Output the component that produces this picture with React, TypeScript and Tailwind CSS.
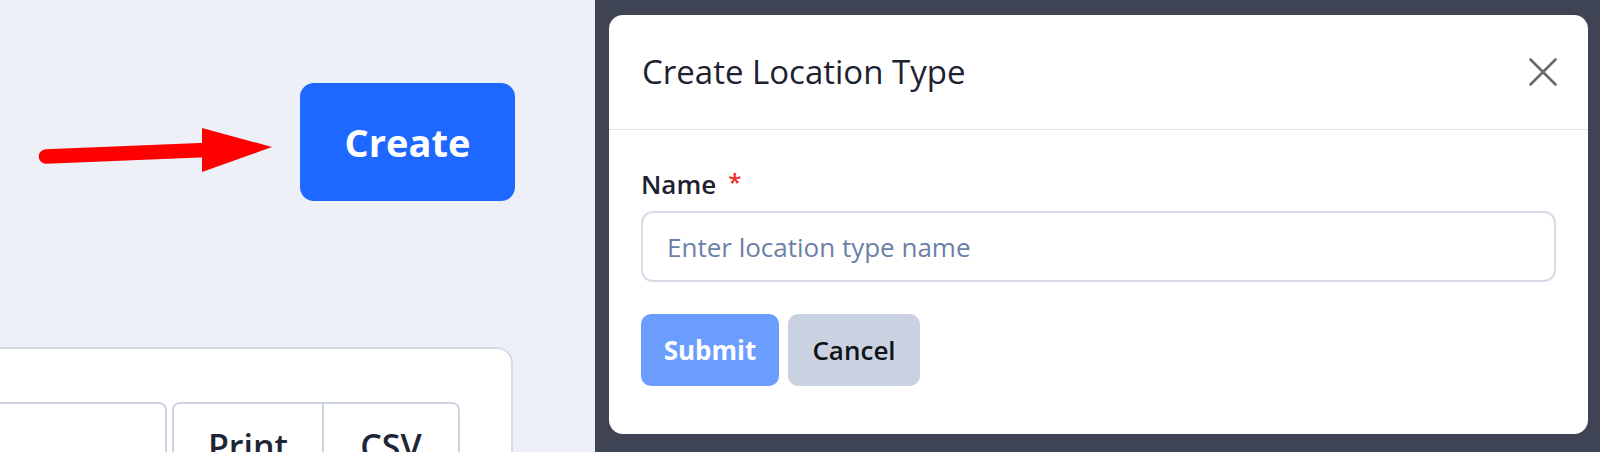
import React from "react";

export default function App() {
  return (
    <div className="flex h-[452px] w-[1600px] overflow-hidden font-['Open_Sans',sans-serif]">
      {/* Left page area */}
      <div className="flex h-full w-[595px] shrink-0 flex-col overflow-hidden bg-[#edf0f6]">
        <div className="flex items-start pt-[83px]">
          <svg
            className="ml-[30px] mr-[20px] mt-[37px] shrink-0"
            width="250"
            height="60"
            viewBox="0 0 250 60"
          >
            <line x1="16" y1="36.5" x2="176" y2="30" stroke="#ff0000" strokeWidth="14.5" strokeLinecap="round" />
            <polygon points="172,8 242,27 172,52" fill="#ff0000" />
          </svg>
          <button className="flex h-[118px] w-[215px] shrink-0 items-center justify-center rounded-[14px] bg-[#1f68ff] text-[38px] font-bold leading-none text-white">
            Create
          </button>
        </div>
        <div className="ml-[-40px] mt-[146px] h-[200px] w-[553px] shrink-0 rounded-[16px] border-2 border-[#d5dae6] bg-white pt-[53px]">
          <div className="flex">
            <div className="h-[80px] w-[205px] rounded-tr-[8px] border-2 border-[#cdd3e0]" />
            <div className="ml-[5px] flex h-[80px] w-[152px] justify-center rounded-tl-[8px] border-2 border-[#cdd3e0] pt-[22px] text-[34px] font-semibold leading-[40px] text-[#1e2636]">
              Print
            </div>
            <div className="flex h-[80px] w-[136px] justify-center rounded-tr-[8px] border-2 border-l-0 border-[#cdd3e0] pt-[22px] text-[34px] font-semibold leading-[40px] text-[#1e2636]">
              CSV
            </div>
          </div>
        </div>
      </div>

      {/* Dark overlay with modal */}
      <div className="flex-1 bg-[#3f4454] pl-[14px] pr-[12px] pt-[15px]">
        <div className="flex h-[419px] flex-col rounded-[14px] bg-white">
          <div className="flex h-[115px] items-center justify-between border-b border-[#dfe3ec] pl-[33px] pr-[31px]">
            <h2 className="text-[33px] font-medium leading-[40px] text-[#1c2230]">Create Location Type</h2>
            <svg width="28" height="28" viewBox="0 0 28 28" className="mt-[-1px]">
              <line x1="1.5" y1="1.5" x2="26.5" y2="26.5" stroke="#6a6a6a" strokeWidth="2.6" strokeLinecap="round" />
              <line x1="26.5" y1="1.5" x2="1.5" y2="26.5" stroke="#6a6a6a" strokeWidth="2.6" strokeLinecap="round" />
            </svg>
          </div>
          <div className="flex flex-col pl-[32px] pr-[32px] pt-[38px]">
            <label className="flex items-start text-[26px] font-semibold leading-[32px] text-[#1c2230]">
              Name
              <span className="ml-[12px] text-[24px] font-semibold leading-[28px] text-[#ef2b2b]">*</span>
            </label>
            <div className="mt-[11px] flex h-[71px] items-center rounded-[12px] border-2 border-[#d6dbe7] pl-[24px] text-[26px] leading-[32px] text-[#6c7fa7]">
              Enter location type name
            </div>
            <div className="mt-[32px] flex gap-[9px]">
              <button className="flex h-[72px] w-[138px] items-center justify-center rounded-[10px] bg-[#6b9dff] text-[26px] font-bold leading-none text-white">
                Submit
              </button>
              <button className="flex h-[72px] w-[132px] items-center justify-center rounded-[10px] bg-[#cad2e2] text-[26px] font-semibold leading-none text-[#111318]">
                Cancel
              </button>
            </div>
          </div>
        </div>
      </div>
    </div>
  );
}
